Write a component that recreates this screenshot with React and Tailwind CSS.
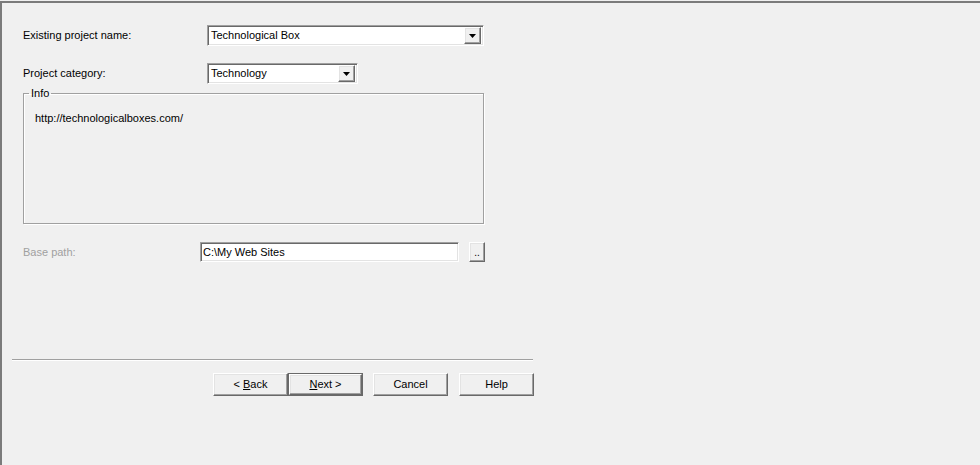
import React from 'react';

// Sunken edit/combo frame, classic Windows look
const sunken =
  'border border-t-[#a0a0a0] border-l-[#a0a0a0] border-r-white border-b-white shadow-[inset_1px_1px_0_#696969,inset_-1px_-1px_0_#e3e3e3] bg-white';

// Raised push button edges
const raised =
  'border border-t-white border-l-white border-r-[#696969] border-b-[#696969] shadow-[inset_-1px_-1px_0_#a0a0a0,inset_1px_1px_0_#e3e3e3] bg-[#f0f0f0]';

function DropArrow() {
  return (
    <div className={`flex h-[17px] w-[17px] shrink-0 items-center justify-center ${raised}`}>
      <svg width="7" height="4" viewBox="0 0 7 4">
        <path d="M0 0h7L3.5 4z" fill="#000" />
      </svg>
    </div>
  );
}

function Combo({ value, width }) {
  return (
    <div className={`flex h-[21px] items-center justify-between pl-[3px] pr-[2px] ${sunken} ${width}`}>
      <span className="text-[11px] leading-none text-black">{value}</span>
      <DropArrow />
    </div>
  );
}

function PushButton({ children, isDefault }) {
  return (
    <div className={`h-[23px] w-[75px] ${isDefault ? 'border border-[#696969]' : ''}`}>
      <div className={`flex h-full w-full items-center justify-center text-[11px] text-black ${raised}`}>
        {children}
      </div>
    </div>
  );
}

export default function App() {
  return (
    <div
      className="h-[465px] w-[980px] overflow-hidden bg-[#f0f0f0] pt-px"
      style={{ fontFamily: '"Liberation Sans", Arial, sans-serif' }}
    >
      <div className="h-full border-l-2 border-t-2 border-[#7b7b7b]">
        <div className="pl-[21px] pt-[22px]">
          <div className="flex items-center">
            <span className="w-[184px] text-[11px] text-black">Existing project name:</span>
            <Combo value="Technological Box" width="w-[277px]" />
          </div>

          <div className="mt-[17px] flex items-center">
            <span className="w-[184px] text-[11px] text-black">Project category:</span>
            <Combo value="Technology" width="w-[151px]" />
          </div>

          <fieldset className="mt-[2px] h-[138px] w-[461px] border border-[#a0a0a0] pl-[11px] shadow-[inset_1px_1px_0_#fff,1px_1px_0_#fff]">
            <legend className="-ml-[6px] px-[2px] text-[11px] leading-[14px] text-black">Info</legend>
            <p className="pt-[11px] text-[11px] leading-[14px] text-black">http://technologicalboxes.com/</p>
          </fieldset>

          <div className="mt-[18px] flex items-center">
            <span className="w-[177px] text-[11px] text-[#a0a0a0]">Base path:</span>
            <div className={`flex h-[20px] w-[259px] items-center pl-[2px] ${sunken}`}>
              <span className="text-[11px] leading-none text-black">C:\My Web Sites</span>
            </div>
            <div className={`ml-[10px] flex h-[20px] w-[16px] items-end justify-center pb-[3px] text-[10px] leading-none text-black ${raised}`}>
              ..
            </div>
          </div>
        </div>

        <div className="ml-[10px] mt-[97px] w-[521px] border-b border-t border-b-white border-t-[#a0a0a0]" />

        <div className="ml-[211px] mt-[12px] flex">
          <PushButton>
            &lt; <span className="ml-[3px] underline">B</span>ack
          </PushButton>
          <PushButton isDefault>
            <span className="underline">N</span>ext &gt;
          </PushButton>
          <div className="ml-[10px]">
            <PushButton>Cancel</PushButton>
          </div>
          <div className="ml-[11px]">
            <PushButton>Help</PushButton>
          </div>
        </div>
      </div>
    </div>
  );
}
